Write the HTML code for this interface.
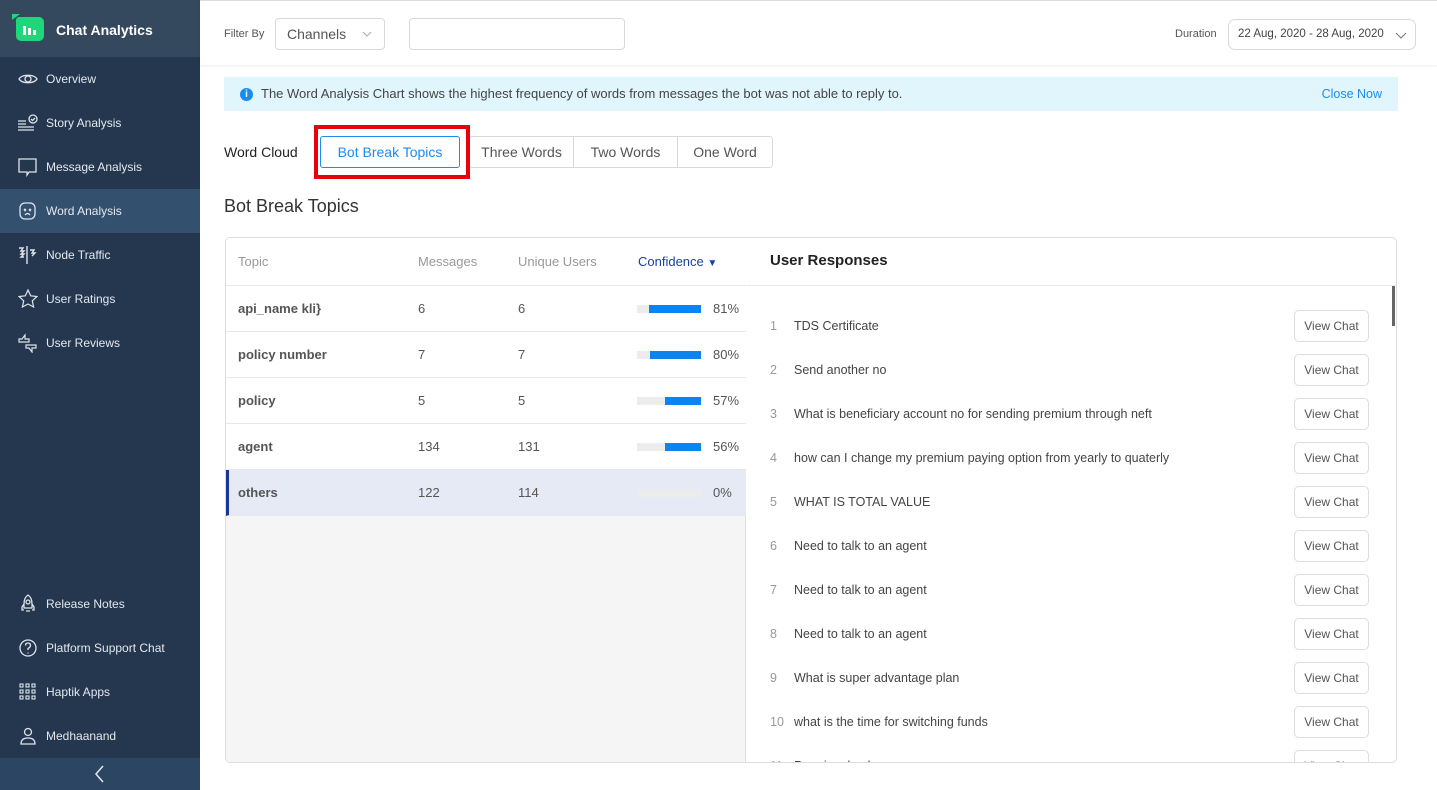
<!DOCTYPE html>
<html><head><meta charset="utf-8"><style>
*{box-sizing:border-box;margin:0;padding:0}
body{width:1437px;height:790px;overflow:hidden;font-family:"Liberation Sans",sans-serif;background:#fff;position:relative;color:#333}
.sb{position:absolute;left:0;top:0;width:200px;height:790px;background:#24374f}
.sbh{position:absolute;left:0;top:0;width:200px;height:57px;background:#34495e}
.logo{position:absolute;left:16px;top:17px;width:28px;height:24px;background:#1fd67a;border-radius:3px 5px 5px 5px}
.logo:before{content:"";position:absolute;left:-4px;top:-3px;border-left:8px solid #1fd67a;border-bottom:6px solid transparent;}
.logo i{position:absolute;bottom:6px;width:3px;background:#fff}
.sbh span{position:absolute;left:56px;top:22px;color:#fff;font-weight:bold;font-size:14px}
.it{position:absolute;left:0;width:200px;height:44px;color:#e4e8ee;font-size:12px;line-height:44px;padding-left:46px}
.it.act{background:#34506f}
.it svg{position:absolute;left:18px;top:12px}
.col{position:absolute;left:0;top:758px;width:200px;height:32px;background:#2c4562}
.main{position:absolute;left:200px;top:0;width:1237px;height:790px}
.top{position:absolute;left:0;top:0;width:1237px;height:65px;border-top:1px solid #ddd;box-shadow:0 1px 3px rgba(0,0,0,.08)}
.box{position:absolute;border:1px solid #d9d9d9;border-radius:4px;background:#fff}
.small{font-size:11px;color:#555;position:absolute}
.info{position:absolute;left:24px;top:77px;width:1174px;height:34px;background:#e1f5fc;font-size:13px;color:#444;line-height:34px;padding-left:37px}
.info b{position:absolute;left:16px;top:11px;width:13px;height:13px;border-radius:50%;background:#1a8cf0;color:#fff;font-size:10px;line-height:13px;text-align:center}
.tab{position:absolute;top:136px;height:32px;border:1px solid #d9d9d9;font-size:14px;color:#555;line-height:30px;text-align:center}
.red{position:absolute;left:114px;top:125px;width:156px;height:54px;border:4px solid #e8000b}
.panel{position:absolute;left:25px;top:237px;width:1172px;height:526px;border:1px solid #ddd;border-radius:5px;overflow:hidden}
.left{position:absolute;left:0;top:0;width:520px;height:526px;background:#f5f5f5;border-right:1px solid #ddd}
.row{position:absolute;left:0;width:520px;height:46px;background:#fff;border-bottom:1px solid #e8e8e8;font-size:13px;line-height:46px;color:#555}
.row span{position:absolute}
.bar{position:absolute;left:411px;top:19px;width:64px;height:8px;background:#ececec}
.bar i{position:absolute;right:0;top:0;height:8px;background:#0a84f0}
.rr{position:absolute;left:521px;width:650px;height:44px;font-size:12.5px;color:#444;line-height:44px}
.vc{position:absolute;left:547px;top:6px;width:75px;height:32px;border:1px solid #ddd;border-radius:5px;font-size:12px;color:#555;line-height:30px;text-align:center}
</style></head><body>
<div class="sb">
 <div class="sbh"><div class="logo"><i style="left:7px;height:9px"></i><i style="left:12px;height:7px"></i><i style="left:17px;height:5px"></i></div><span>Chat Analytics</span></div>
 <div class="it" style="top:57px"><svg width="20" height="20" viewBox="0 0 20 20" fill="none" stroke="#dfe4ea" stroke-width="1.3"><path d="M1 10C4 5 16 5 19 10C16 15 4 15 1 10Z"/><circle cx="10" cy="10" r="3"/></svg>Overview</div>
 <div class="it" style="top:101px"><svg width="20" height="20" viewBox="0 0 20 20" fill="none" stroke="#dfe4ea" stroke-width="1.3"><path d="M0 8h8M0 11h8M0 14h16M0 17h16"/><circle cx="15" cy="6" r="4"/><path d="M13 6l1.5 1.5L17 5"/></svg>Story Analysis</div>
 <div class="it" style="top:145px"><svg width="20" height="20" viewBox="0 0 20 20" fill="none" stroke="#dfe4ea" stroke-width="1.3"><path d="M1 2h17v13H11l-2 3v-3H1z"/></svg>Message Analysis</div>
 <div class="it act" style="top:189px"><svg width="20" height="20" viewBox="0 0 20 20" fill="none" stroke="#dfe4ea" stroke-width="1.3"><rect x="2" y="2" width="15" height="16" rx="5"/><path d="M6 8l2 2M8 8l-2 2M11 8l2 2M13 8l-2 2M7 14q2.5-3 5 0"/></svg>Word Analysis</div>
 <div class="it" style="top:233px"><svg width="20" height="20" viewBox="0 0 20 20" fill="none" stroke="#dfe4ea" stroke-width="1.4"><path d="M1 3h4l-2 3h3l-3 3h3l-3 3h3M9 1v18M12 5h4l-2 3h3l-3 3"/></svg>Node Traffic</div>
 <div class="it" style="top:277px"><svg width="20" height="20" viewBox="0 0 20 20" fill="none" stroke="#dfe4ea" stroke-width="1.2"><path d="M10 1l2.7 5.8 6.3.7-4.7 4.3 1.3 6.2L10 15l-5.6 3 1.3-6.2L1 7.5l6.3-.7z"/></svg>User Ratings</div>
 <div class="it" style="top:321px"><svg width="20" height="20" viewBox="0 0 20 20" fill="none" stroke="#dfe4ea" stroke-width="1.2"><path d="M1 6h3l3-4v4h4v3H1zM8 12h10v3h-4v4l-3-4H8z"/></svg>User Reviews</div>
 <div class="it" style="top:582px"><svg width="20" height="20" viewBox="0 0 20 20" fill="none" stroke="#dfe4ea" stroke-width="1.3"><path d="M10 1c3 2 4 5 4 9v4H6v-4c0-4 1-7 4-9zM6 10l-2 3v3h2M14 10l2 3v3h-2M8 17h4"/><circle cx="10" cy="8" r="2"/></svg>Release Notes</div>
 <div class="it" style="top:626px"><svg width="20" height="20" viewBox="0 0 20 20" fill="none" stroke="#dfe4ea" stroke-width="1.3"><circle cx="10" cy="10" r="8"/><path d="M7.5 7.5q0-2.5 2.5-2.5t2.5 2.5q0 1.5-2.5 3v1.5M10 14.5v1"/></svg>Platform Support Chat</div>
 <div class="it" style="top:670px"><svg width="20" height="20" viewBox="0 0 20 20" fill="none" stroke="#dfe4ea" stroke-width="1.1"><rect x="2" y="2" width="3" height="3"/><rect x="8" y="2" width="3" height="3"/><rect x="14" y="2" width="3" height="3"/><rect x="2" y="8" width="3" height="3"/><rect x="8" y="8" width="3" height="3"/><rect x="14" y="8" width="3" height="3"/><rect x="2" y="14" width="3" height="3"/><rect x="8" y="14" width="3" height="3"/><rect x="14" y="14" width="3" height="3"/></svg>Haptik Apps</div>
 <div class="it" style="top:714px"><svg width="20" height="20" viewBox="0 0 20 20" fill="none" stroke="#dfe4ea" stroke-width="1.3"><circle cx="10" cy="6" r="3.5"/><path d="M3 18q0-6 7-6t7 6z"/></svg>Medhaanand</div>
 <div class="col"><svg style="position:absolute;left:93px;top:7px" width="14" height="18" viewBox="0 0 14 18" fill="none" stroke="#e4e8ee" stroke-width="1.5"><path d="M10 1L3 9l7 8"/></svg></div>
</div>
<div class="main">
 <div class="top">
  <div class="small" style="left:24px;top:27px">Filter By</div>
  <div class="box" style="left:75px;top:17px;width:110px;height:32px;font-size:14px;color:#555;line-height:30px;padding-left:11px">Channels<svg style="position:absolute;left:86px;top:12px" width="10" height="6" viewBox="0 0 10 6" fill="none" stroke="#aaa"><path d="M1 1l4 4 4-4"/></svg></div>
  <div class="box" style="left:209px;top:17px;width:216px;height:32px"></div>
  <div class="small" style="left:975px;top:27px">Duration</div>
  <div class="box" style="left:1028px;top:18px;width:188px;height:31px;border-radius:7px;font-size:11.5px;color:#444;line-height:29px;padding-left:9px">22 Aug, 2020 - 28 Aug, 2020<svg style="position:absolute;left:166px;top:12px" width="12" height="7" viewBox="0 0 12 7" fill="none" stroke="#777"><path d="M1 1l5 5 5-5"/></svg></div>
 </div>
 <div class="info"><b>i</b>The Word Analysis Chart shows the highest frequency of words from messages the bot was not able to reply to.<span style="position:absolute;right:16px;color:#1a8cf0;font-size:12.5px">Close Now</span></div>
 <div style="position:absolute;left:24px;top:144px;font-size:14px;color:#222">Word Cloud</div>
 <div class="tab" style="left:120px;width:140px;border-color:#1a8cf0;color:#1a8cf0;border-radius:3px">Bot Break Topics</div>
 <div class="tab" style="left:269px;width:105px;border-radius:3px 0 0 3px">Three Words</div>
 <div class="tab" style="left:373px;width:105px">Two Words</div>
 <div class="tab" style="left:477px;width:96px;border-radius:0 3px 3px 0">One Word</div>
 <div class="red"></div>
 <div style="position:absolute;left:24px;top:196px;font-size:18px;color:#333">Bot Break Topics</div>
 <div class="panel">
  <div class="left">
   <div class="row" style="top:0;height:48px;line-height:48px;color:#999"><span style="left:12px">Topic</span><span style="left:192px">Messages</span><span style="left:292px">Unique Users</span><span style="left:412px;color:#1a3fa8">Confidence <small style="font-size:10px">▼</small></span></div>
   <div class="row" style="top:48px"><span style="left:12px;font-weight:bold">api_name kli}</span><span style="left:192px">6</span><span style="left:292px">6</span><div class="bar"><i style="width:52px"></i></div><span style="left:487px">81%</span></div>
   <div class="row" style="top:94px"><span style="left:12px;font-weight:bold">policy number</span><span style="left:192px">7</span><span style="left:292px">7</span><div class="bar"><i style="width:51px"></i></div><span style="left:487px">80%</span></div>
   <div class="row" style="top:140px"><span style="left:12px;font-weight:bold">policy</span><span style="left:192px">5</span><span style="left:292px">5</span><div class="bar"><i style="width:36px"></i></div><span style="left:487px">57%</span></div>
   <div class="row" style="top:186px"><span style="left:12px;font-weight:bold">agent</span><span style="left:192px">134</span><span style="left:292px">131</span><div class="bar"><i style="width:36px"></i></div><span style="left:487px">56%</span></div>
   <div class="row" style="top:232px;background:#e6eaf5;border-left:3px solid #1a3498"><span style="left:9px;font-weight:bold">others</span><span style="left:189px">122</span><span style="left:289px">114</span><div class="bar" style="left:408px"></div><span style="left:484px">0%</span></div>
  </div>
  <div style="position:absolute;left:521px;top:0;width:650px;height:48px;border-bottom:1px solid #e8e8e8;font-size:15px;font-weight:bold;color:#222;line-height:46px;padding-left:23px">User Responses</div>
  <div style="position:absolute;left:1166px;top:48px;width:3px;height:40px;background:#666"></div>
  <div class="rr" style="top:66px"><span style="position:absolute;left:23px;color:#999">1</span><span style="position:absolute;left:47px">TDS Certificate</span><div class="vc">View Chat</div></div>
  <div class="rr" style="top:110px"><span style="position:absolute;left:23px;color:#999">2</span><span style="position:absolute;left:47px">Send another no</span><div class="vc">View Chat</div></div>
  <div class="rr" style="top:154px"><span style="position:absolute;left:23px;color:#999">3</span><span style="position:absolute;left:47px">What is beneficiary account no for sending premium through neft</span><div class="vc">View Chat</div></div>
  <div class="rr" style="top:198px"><span style="position:absolute;left:23px;color:#999">4</span><span style="position:absolute;left:47px">how can I change my premium paying option from yearly to quaterly</span><div class="vc">View Chat</div></div>
  <div class="rr" style="top:242px"><span style="position:absolute;left:23px;color:#999">5</span><span style="position:absolute;left:47px">WHAT IS TOTAL VALUE</span><div class="vc">View Chat</div></div>
  <div class="rr" style="top:286px"><span style="position:absolute;left:23px;color:#999">6</span><span style="position:absolute;left:47px">Need to talk to an agent</span><div class="vc">View Chat</div></div>
  <div class="rr" style="top:330px"><span style="position:absolute;left:23px;color:#999">7</span><span style="position:absolute;left:47px">Need to talk to an agent</span><div class="vc">View Chat</div></div>
  <div class="rr" style="top:374px"><span style="position:absolute;left:23px;color:#999">8</span><span style="position:absolute;left:47px">Need to talk to an agent</span><div class="vc">View Chat</div></div>
  <div class="rr" style="top:418px"><span style="position:absolute;left:23px;color:#999">9</span><span style="position:absolute;left:47px">What is super advantage plan</span><div class="vc">View Chat</div></div>
  <div class="rr" style="top:462px"><span style="position:absolute;left:23px;color:#999">10</span><span style="position:absolute;left:47px">what is the time for switching funds</span><div class="vc">View Chat</div></div>
  <div class="rr" style="top:506px"><span style="position:absolute;left:23px;color:#999">11</span><span style="position:absolute;left:47px">Premium backup</span><div class="vc">View Chat</div></div>
 </div>
</div>
</body></html>
